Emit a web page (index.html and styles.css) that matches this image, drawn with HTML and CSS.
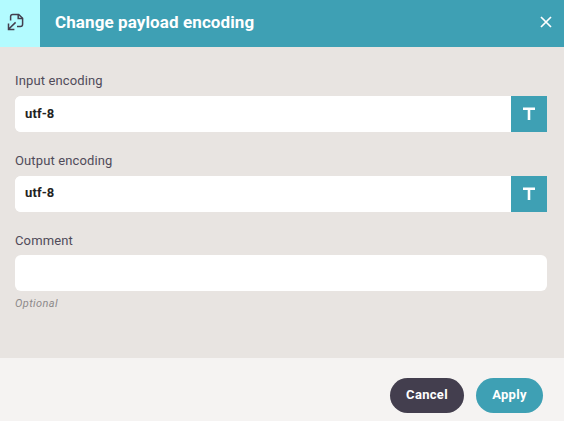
FILE: index.html
```html
<!DOCTYPE html>
<html lang="en">
<head>
    <meta charset="UTF-8">
    <title>Change payload encoding</title>
    <link rel="stylesheet" href="styles.css">
</head>
<body>
<div class="dialog">
    <div class="header">
        <div class="header-icon">
            <svg width="20" height="20" viewBox="0 0 20 20">
                <path d="M4.6 9.5V5.6Q4.6 3.4 6.8 3.4H12.7L16.6 7.2V13.2Q16.6 15.5 14.3 15.5H11"/>
                <path d="M12.2 3.5V7.6H16.5"/>
                <path d="M9.6 11.4L2.8 18M2.5 12.4V18.4H8.4"/>
            </svg>
        </div>
        <h1 class="title">Change payload encoding</h1>
        <button class="close">
            <svg width="12" height="12" viewBox="0 0 12 12">
                <path d="M1 1L11 11M11 1L1 11"/>
            </svg>
        </button>
    </div>
    <div class="content">
        <div class="field">
            <label class="label" for="input">Input encoding</label>
            <div class="group">
                <input type="text" class="text" id="input" value="utf-8">
                <button class="type">
                    <svg width="12" height="14" viewBox="0 0 12 14"><path d="M0 .5H12V3H7.3V13H4.7V3H0Z"/></svg>
                </button>
            </div>
        </div>
        <div class="field">
            <label class="label" for="output">Output encoding</label>
            <div class="group">
                <input type="text" class="text text-output" id="output" value="utf-8">
                <button class="type">
                    <svg width="12" height="14" viewBox="0 0 12 14"><path d="M0 .5H12V3H7.3V13H4.7V3H0Z"/></svg>
                </button>
            </div>
        </div>
        <div class="field comment">
            <label class="label" for="comment">Comment</label>
            <div class="group">
                <input type="text" class="text" id="comment">
            </div>
            <span class="hint">Optional</span>
        </div>
    </div>
    <div class="footer">
        <button class="btn cancel">Cancel</button>
        <button class="btn apply">Apply</button>
    </div>
</div>
</body>
</html>
```
FILE: styles.css
```css
body {
    margin: 0;
    font-family: Roboto, sans-serif;
}

button, input {
    margin: 0;
    padding: 0;
    border: 0;
    font-family: inherit;
}

button {
    cursor: pointer;
}

.dialog {
    display: flex;
    flex-direction: column;
    height: 421px;
    overflow: hidden;
    background: #e8e4e1;
}

.header {
    display: flex;
    height: 47px;
    background: #3ea0b4;
}

.header-icon {
    width: 40px;
    padding: 11px 0 0 6px;
    box-sizing: border-box;
    background: #b3fbff;
}

.header-icon svg {
    display: block;
    fill: none;
    stroke: #433e4e;
    stroke-width: 1.5;
}

.title {
    flex: 1;
    margin: 0;
    padding-left: 15px;
    color: white;
    font-size: 17px;
    font-weight: 700;
    line-height: 44px;
    letter-spacing: 0.1px;
}

.close {
    width: 36px;
    height: 44px;
    background: none;
}

.close svg {
    display: block;
    margin: 0 auto;
    stroke: white;
    stroke-width: 1.7;
}

.content {
    flex: 1;
    padding: 24px 17px 0 15px;
}

.field {
    height: 80px;
}

.label {
    display: block;
    height: 25px;
    color: #504b5a;
    font-size: 13px;
    line-height: 19px;
    letter-spacing: 0.13px;
}

.group {
    display: flex;
    height: 36px;
    overflow: hidden;
    border-radius: 6px 0 0 6px;
    background: white;
}

.text {
    flex: 1;
    min-width: 0;
    padding: 0 10px 2px;
    background: white;
    color: #222;
    font-size: 13px;
    font-weight: 700;
    letter-spacing: 0.1px;
    outline: none;
}

.text-output {
    padding-bottom: 4px;
}

.type {
    width: 36px;
    background: #3ea0b4;
}

.type svg {
    display: block;
    margin: 0 auto;
    fill: white;
}

.comment .label {
    height: 24px;
}

.comment .group {
    border-radius: 6px;
}

.hint {
    display: block;
    margin-top: 5px;
    color: #8d8a8b;
    font-size: 11px;
    font-style: italic;
    line-height: 16px;
    letter-spacing: 0.4px;
}

.footer {
    display: flex;
    justify-content: flex-end;
    gap: 12px;
    height: 63px;
    padding: 20px 21px 0 0;
    box-sizing: border-box;
    background: #f5f3f2;
}

.btn {
    height: 35px;
    padding-bottom: 2px;
    border-radius: 18px;
    color: white;
    font-size: 13px;
    font-weight: 700;
    letter-spacing: 0.3px;
}

.cancel {
    width: 74px;
    background: #433e4e;
}

.apply {
    width: 67px;
    background: #3ea0b4;
}
```
